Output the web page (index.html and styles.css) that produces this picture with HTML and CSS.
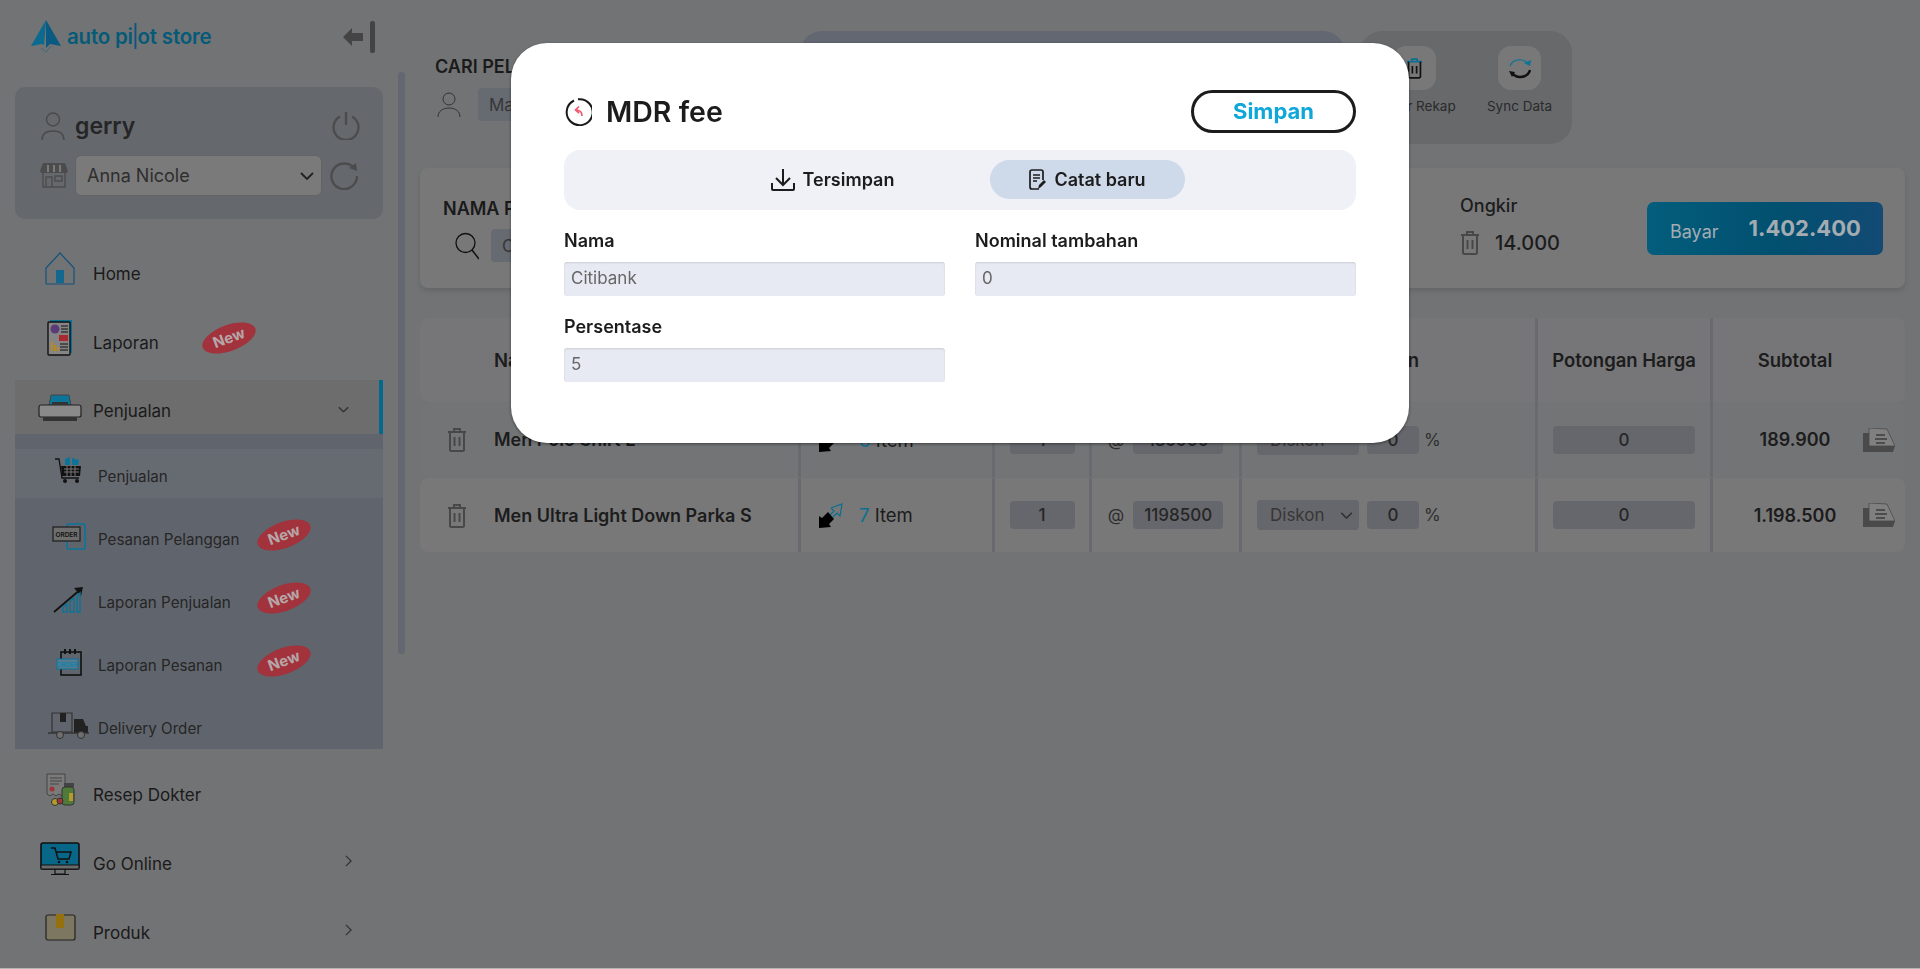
FILE: index.html
```html
<!DOCTYPE html>
<html lang="en">
<head>
    <meta charset="UTF-8">
    <title>Auto Pilot Store - Penjualan</title>
    <link rel="stylesheet" href="styles.css">
</head>
<body>
    <svg class="defs" width="0" height="0">
        <defs>
            <symbol id="trash" viewBox="0 0 20 25">
                <path d="M1 5h18M7 5V2h6v3M3 5v17.500q0 1.500 1.500 1.500h11q1.500 0 1.500-1.500V5M7.500 10v9M12.500 10v9" fill="none" stroke="currentColor" stroke-width="2"/>
            </symbol>
            <symbol id="share" viewBox="0 0 25 25">
                <path d="M13 5L24 1 22 13 19 10 15 14M13 5l3 3-4 4" fill="none" stroke="#0a6f90" stroke-width="1.200"/>
                <path d="M1 25V13l3 2 6-6 6 7-5 5 2 3z" fill="#000"/>
            </symbol>
            <symbol id="note" viewBox="0 0 32 24">
                <path d="M0 5h6v13h26l-2 6H0z" fill="#4a4a4a"/>
                <path d="M6 0l18 1 8 17H6z" fill="#808080" stroke="#4a4a4a" stroke-width=".8"/>
                <path d="M13 7h9M12 11h12M13 15h9" stroke="#3c3c3c" stroke-width="1.500"/>
            </symbol>
            <symbol id="chev-right" viewBox="0 0 8 14">
                <path d="M1 1l6 6-6 6" fill="none" stroke="#333" stroke-width="1.500"/>
            </symbol>
            <symbol id="chev-down" viewBox="0 0 14 8">
                <path d="M1 1l6 6 6-6" fill="none" stroke="currentColor" stroke-width="1.800"/>
            </symbol>
        </defs>
    </svg>

    <div class="app">
        <aside class="sidebar">
            <div class="scroll-thumb"></div>
            <div class="brand">
                <svg class="brand-mark" viewBox="0 0 32 34">
                    <path d="M16 1L1 27l11-2 2 1z" fill="#0a6a90"/>
                    <path d="M16 1l15 26-11-2-4 4z" fill="#0a5a82"/>
                    <path d="M11 29l5 4 5-6" fill="none" stroke="#3d6a7c" stroke-width="1"/>
                </svg>
                <span class="brand-name">auto pi<span class="brand-l">l</span>ot store</span>
                <svg class="collapse" viewBox="0 0 32 32">
                    <path d="M0 16L9 7v5h11v8H9v5z" fill="#444"/>
                    <rect x="27" y="0" width="5" height="32" rx="2" fill="#444"/>
                </svg>
            </div>

            <div class="user-card">
                <div class="user-row">
                    <svg class="u-icon" viewBox="0 0 24 28"><circle cx="12" cy="7.500" r="6.500" fill="none" stroke="#4a4a4a" stroke-width="1.400"/><path d="M1 28c0-7 5-9 11-9s11 2 11 9" fill="none" stroke="#4a4a4a" stroke-width="1.400"/></svg>
                    <span class="user-name">gerry</span>
                    <svg class="round-icon" viewBox="0 0 28 28"><path d="M8 4.500A12.500 12.500 0 1 0 20 4.500M14 0v13" fill="none" stroke="#4c4c4c" stroke-width="2.400"/></svg>
                </div>
                <div class="user-row">
                    <svg class="u-icon store" viewBox="0 0 28 25"><path d="M3 10v14h22V10M6 24V14h6v10M15 13h7v5h-7z" fill="none" stroke="#4c4c4c" stroke-width="1.400"/><path d="M3 0h22l3 8q-1 3-3 2H3q-2 1-3-2z" fill="#4c4c4c"/><path d="M8 2v7M14 2v7M20 2v7" stroke="#7a7b7c" stroke-width="2"/></svg>
                    <div class="store-select">
                        <span>Anna Nicole</span>
                        <svg class="select-chev" viewBox="0 0 14 8"><use href="#chev-down"/></svg>
                    </div>
                    <svg class="round-icon" viewBox="0 0 28 28"><path d="M24 6A12.800 12.800 0 1 0 27 14" fill="none" stroke="#4c4c4c" stroke-width="2.400"/><path d="M19 6l7-5 1 8z" fill="#4c4c4c"/></svg>
                </div>
            </div>

            <nav class="nav">
                <a class="nav-item">
                    <span class="nav-icon"><svg width="30" height="33" viewBox="0 0 30 33"><path d="M15 1L1 16v15q0 1 1 1h26q1 0 1-1V16z" fill="none" stroke="#14527c" stroke-width="1.200"/><rect x="11" y="18" width="8" height="13" fill="#14688f"/></svg></span>
                    <span>Home</span>
                </a>
                <a class="nav-item">
                    <span class="nav-icon"><svg width="26" height="36" viewBox="0 0 26 36"><rect x="3" y="0" width="22" height="33" fill="#0c6f90"/><rect x="1" y="2" width="22" height="33" rx="1" fill="#858585" stroke="#111" stroke-width="1.400"/><circle cx="8" cy="9" r="4.500" fill="#5b3a78"/><path d="M14 6h7M14 9h7M14 12h7M13 24h8M13 27h8M13 30h8" stroke="#111"/><rect x="12" y="15" width="9" height="6" fill="#a82a30"/><path d="M4 22h2v9H4zM7 25h2v6H7zM10 27h2v4h-2z" fill="#b58a20"/></svg></span>
                    <span>Laporan</span>
                    <span class="badge badge-main">New</span>
                </a>
                <a class="nav-item active">
                    <span class="nav-icon"><svg width="44" height="28" viewBox="0 0 44 28"><path d="M11 12l2-10h18l2 10z" fill="#0a7499" stroke="#444"/><rect x="1" y="12" width="42" height="12" rx="2" fill="#8a8a8a" stroke="#222" stroke-width="1.200"/><rect x="5" y="24" width="34" height="4" fill="#333"/><rect x="14" y="9" width="16" height="3" fill="#333"/></svg></span>
                    <span class="active-label">Penjualan</span>
                    <svg class="chev-d" viewBox="0 0 14 8"><use href="#chev-down"/></svg>
                </a>
                <div class="sub-nav">
                    <a class="sub-item current">
                        <span class="sub-icon"><svg width="27" height="26" viewBox="0 0 27 26"><path d="M0 2h4l3 19h17" fill="none" stroke="#111" stroke-width="1.300"/><path d="M6 9h20l-1 10H7z" fill="#111"/><path d="M9 12h15M9 15h15M12 9v10M16 9v10M20 9v10" stroke="#777"/><path d="M10 2l5-2v8h-5zM17 1l7 2-1 5h-6z" fill="#0a7499"/><circle cx="10" cy="24" r="2" fill="#111"/><circle cx="22" cy="24" r="2" fill="#111"/></svg></span>
                        <span>Penjualan</span>
                    </a>
                    <a class="sub-item">
                        <span class="sub-icon"><svg width="34" height="27" viewBox="0 0 34 27"><rect x="15" y="1" width="18" height="25" rx="2" fill="none" stroke="#0a7499" stroke-width="1.600"/><rect x="1" y="4" width="27" height="14" fill="#6e6e6e" stroke="#222" stroke-width="1.300"/><text x="14.500" y="14" class="ico-text">ORDER</text></svg></span>
                        <span>Pesanan Pelanggan</span>
                        <span class="badge">New</span>
                    </a>
                    <a class="sub-item">
                        <span class="sub-icon"><svg width="31" height="27" viewBox="0 0 31 27"><path d="M1 26L28 3" stroke="#111" stroke-width="1.800"/><path d="M21 2l9-1-2 9z" fill="#111"/><path d="M10 26v-5l4-3v8zM17 26V15l4-3v14zM24 26V10l3-3v19z" fill="none" stroke="#0a7499" stroke-width="1.400"/></svg></span>
                        <span>Laporan Penjualan</span>
                        <span class="badge">New</span>
                    </a>
                    <a class="sub-item">
                        <span class="sub-icon"><svg width="26" height="27" viewBox="0 0 26 27"><rect x="5" y="3" width="20" height="23" fill="none" stroke="#111" stroke-width="1.600"/><path d="M9 0v5M14 0v5M19 0v5" stroke="#111" stroke-width="2"/><rect x="1" y="10" width="21" height="10" fill="#587a90" stroke="#0a7499"/><text x="11.500" y="17.500" class="ico-text blue">ORDER</text></svg></span>
                        <span>Laporan Pesanan</span>
                        <span class="badge">New</span>
                    </a>
                    <a class="sub-item">
                        <span class="sub-icon"><svg width="42" height="27" viewBox="0 0 42 27"><path d="M4 1h20v19H4z" fill="none" stroke="#333" stroke-width="1.200"/><rect x="12" y="1" width="6" height="9" fill="#222"/><path d="M26 7h9l3 7h2v7H26z" fill="#222"/><path d="M0 21h41" stroke="#333" stroke-width="1.500"/><circle cx="12" cy="23" r="3.500" fill="#6e6e6e" stroke="#333"/><circle cx="33" cy="23" r="3.500" fill="#6e6e6e" stroke="#333"/></svg></span>
                        <span>Delivery Order</span>
                    </a>
                </div>
                <a class="nav-item after-sub">
                    <span class="nav-icon"><svg width="29" height="33" viewBox="0 0 29 33"><path d="M1 1h18v20l-3 2-3-2-3 2-3-2-3 2-3-2z" fill="#7a7a7a" stroke="#444"/><path d="M4 5h12M4 8h12M4 11h9" stroke="#444"/><circle cx="6" cy="16" r="2.500" fill="#9c3438"/><rect x="18" y="10" width="10" height="4" fill="#444"/><rect x="16" y="14" width="12" height="18" rx="3" fill="#4f7a3a" stroke="#333"/><rect x="23" y="20" width="4" height="8" fill="#b59a2e"/><circle cx="9" cy="29" r="3.500" fill="#b59a2e" stroke="#333"/><circle cx="14" cy="28" r="3" fill="#9c3438" stroke="#333"/></svg></span>
                    <span>Resep Dokter</span>
                </a>
                <a class="nav-item">
                    <span class="nav-icon"><svg width="40" height="33" viewBox="0 0 40 33"><rect x="1" y="1" width="38" height="26" rx="2" fill="#086689" stroke="#111" stroke-width="1.600"/><rect x="1" y="23" width="38" height="4" fill="#6a6b6d" stroke="#111"/><path d="M11 6h4l3 11h11l2-7H16" fill="none" stroke="#111" stroke-width="1.500"/><circle cx="19" cy="20" r="1.300" fill="#111"/><circle cx="27" cy="20" r="1.300" fill="#111"/><path d="M15 27v5h10v-5M11 32.500h18" fill="none" stroke="#111" stroke-width="1.200"/></svg></span>
                    <span>Go Online</span>
                    <svg class="chev-r" viewBox="0 0 8 14"><use href="#chev-right"/></svg>
                </a>
                <a class="nav-item">
                    <span class="nav-icon"><svg width="31" height="27" viewBox="0 0 31 27"><rect x="1" y="1" width="29" height="25" rx="2" fill="#7d7660" stroke="#222" stroke-width="1.200"/><rect x="11" y="0" width="8" height="14" fill="#94700f"/></svg></span>
                    <span>Produk</span>
                    <svg class="chev-r" viewBox="0 0 8 14"><use href="#chev-right"/></svg>
                </a>
            </nav>
        </aside>

        <main class="main">
            <div class="top-bar">
                <div class="search-customer">
                    <div class="block-title">CARI PELANGGAN</div>
                    <div class="field-row">
                        <svg class="person" viewBox="0 0 24 25"><circle cx="12" cy="7" r="6" fill="none" stroke="#333" stroke-width="1"/><path d="M1 25c0-6 5-9 11-9s11 3 11 9" fill="none" stroke="#333" stroke-width="1"/></svg>
                        <input class="dim-input" value="Masukkan nama">
                    </div>
                </div>
                <div class="mid-pill"></div>
                <div class="tools">
                    <div class="tool">
                        <div class="tool-btn"><svg width="17" height="22" viewBox="0 0 20 25"><path d="M1 5h18M7 5V2h6v3" fill="none" stroke="#0a6f90" stroke-width="2"/><path d="M3 5v17.500q0 1.500 1.500 1.500h11q1.500 0 1.500-1.500V5M7.500 10v9M12.500 10v9" fill="none" stroke="#111" stroke-width="2"/></svg></div>
                        <span>Daftar Rekap</span>
                    </div>
                    <div class="tool">
                        <div class="tool-btn"><svg width="22" height="22" viewBox="0 0 22 22"><path d="M1 9a10 9 0 0 1 18-2" fill="none" stroke="#0a7499" stroke-width="1.200"/><path d="M15 6l6 3 1-6z" fill="#0a7499"/><path d="M21 13a10 9 0 0 1-18 3" fill="none" stroke="#111" stroke-width="2.500"/><path d="M0 14l6 1-3 5z" fill="#111"/></svg></div>
                        <span>Sync Data</span>
                    </div>
                </div>
            </div>

            <section class="checkout">
                <div class="buyer">
                    <div class="block-title">NAMA PELANGGAN</div>
                    <div class="field-row">
                        <svg class="lens" viewBox="0 0 24 28"><circle cx="10.500" cy="11" r="9.500" fill="none" stroke="#111" stroke-width="1.300"/><path d="M17 18l7 9" stroke="#111" stroke-width="1.500"/></svg>
                        <input class="dim-input" value="Cari">
                    </div>
                </div>
                <div class="ongkir">
                    <div class="ongkir-title">Ongkir</div>
                    <div class="ongkir-row">
                        <svg class="trash" viewBox="0 0 20 25"><use href="#trash"/></svg>
                        <span>14.000</span>
                    </div>
                </div>
                <button class="pay"><span class="pay-label">Bayar</span><span class="pay-total">1.402.400</span></button>
            </section>

            <section class="cart">
                <div class="cart-row cart-head">
                    <div class="cell name-cell">Nama Barang</div>
                    <div class="cell center">Item</div>
                    <div class="cell center">Qty</div>
                    <div class="cell center">Harga</div>
                    <div class="cell center">Diskon</div>
                    <div class="cell center">Potongan Harga</div>
                    <div class="cell subtotal-head">Subtotal</div>
                </div>
                <div class="cart-row row-odd">
                    <div class="cell name-cell"><svg class="trash row-trash" viewBox="0 0 20 25"><use href="#trash"/></svg><b>Men Polo Shirt L</b></div>
                    <div class="cell item-cell"><svg class="share" viewBox="0 0 25 25"><use href="#share"/></svg><span><em>6</em> Item</span></div>
                    <div class="cell center"><input class="cell-input qty" value="1"></div>
                    <div class="cell center"><span class="at">@</span><input class="cell-input price" value="189900"></div>
                    <div class="cell disc-cell">
                        <div class="disc-select"><span>Diskon</span><svg viewBox="0 0 14 8"><use href="#chev-down"/></svg></div>
                        <input class="cell-input pct" value="0"><span class="pct-sign">%</span>
                    </div>
                    <div class="cell center"><input class="cell-input cut" value="0"></div>
                    <div class="cell total-cell"><b>189.900</b><svg class="note" viewBox="0 0 32 24"><use href="#note"/></svg></div>
                </div>
                <div class="cart-row row-even">
                    <div class="cell name-cell"><svg class="trash row-trash" viewBox="0 0 20 25"><use href="#trash"/></svg><b>Men Ultra Light Down Parka S</b></div>
                    <div class="cell item-cell"><svg class="share" viewBox="0 0 25 25"><use href="#share"/></svg><span><em>7</em> Item</span></div>
                    <div class="cell center"><input class="cell-input qty" value="1"></div>
                    <div class="cell center"><span class="at">@</span><input class="cell-input price" value="1198500"></div>
                    <div class="cell disc-cell">
                        <div class="disc-select"><span>Diskon</span><svg viewBox="0 0 14 8"><use href="#chev-down"/></svg></div>
                        <input class="cell-input pct" value="0"><span class="pct-sign">%</span>
                    </div>
                    <div class="cell center"><input class="cell-input cut" value="0"></div>
                    <div class="cell total-cell"><b>1.198.500</b><svg class="note" viewBox="0 0 32 24"><use href="#note"/></svg></div>
                </div>
            </section>
        </main>
    </div>

    <div class="overlay">
        <div class="modal">
            <div class="modal-head">
                <svg class="back" viewBox="0 0 28 28"><path d="M10 2.500a13 13 0 1 0 4-1.200" fill="none" stroke="#1a1a1a" stroke-width="2"/><path d="M18 18c0-4-2-6-6-6M15 8.500L11.500 12l3.500 3" fill="none" stroke="#ef5a6f" stroke-width="1.700"/></svg>
                <h2>MDR fee</h2>
                <button class="save">Simpan</button>
            </div>
            <div class="tabs">
                <div class="tab">
                    <svg class="tab-down" viewBox="0 0 24 22"><path d="M12 0v15M5 9l7 7 7-7M1 14v6q0 1 1 1h20q1 0 1-1v-6" fill="none" stroke="#1c1c1c" stroke-width="2"/></svg>
                    <span>Tersimpan</span>
                </div>
                <div class="tab on">
                    <svg class="tab-note" viewBox="0 0 17 21"><path d="M10 20H3q-2 0-2-2V3q0-2 2-2h9q2 0 2 2v8" fill="none" stroke="#1c1c1c" stroke-width="1.700"/><path d="M4 6h7M4 9h7M4 12h4" stroke="#1c1c1c" stroke-width="1.500"/><path d="M9 20l1-4 5-5 2 2-5 5z" fill="#1c1c1c"/></svg>
                    <span>Catat baru</span>
                </div>
            </div>
            <div class="form-grid">
                <label class="field">Nama<input value="Citibank"></label>
                <label class="field">Nominal tambahan<input value="0"></label>
                <label class="field">Persentase<input value="5"></label>
            </div>
        </div>
    </div>
</body>
</html>
```

FILE: styles.css
```css
* {
    box-sizing: border-box;
}
html {
    height: 100%;
    overflow: hidden;
    background: #b4b4b4;
}
body {
    margin: 0;
    height: 968px;
    overflow: hidden;
    font-family: Inter, "Open Sans", sans-serif;
    background: #727375;
    color: #1c1c1c;
}
input, button {
    font-family: inherit;
}
.defs {
    position: absolute;
}
.app {
    display: flex;
    height: 968px;
}

/* sidebar */
.sidebar {
    position: relative;
    width: 420px;
    flex: none;
    height: 968px;
    overflow: hidden;
}
.scroll-thumb {
    position: absolute;
    left: 398px;
    top: 72px;
    width: 7px;
    height: 582px;
    border-radius: 4px;
    background: #636870;
}
.brand {
    display: flex;
    align-items: center;
    height: 72px;
    padding-left: 30px;
    width: 383px;
    position: relative;
}
.brand-mark {
    width: 32px;
    height: 34px;
    margin-top: -1px;
}
.brand-name {
    margin-left: 5px;
    font-size: 20.500px;
    font-weight: 600;
    color: #055a78;
    letter-spacing: -0.2px;
}
.brand-l {
    display: inline-block;
    color: #0c5480;
    transform: scaleY(1.700);
    font-weight: 400;
}
.collapse {
    position: absolute;
    left: 343px;
    top: 21px;
    width: 32px;
    height: 32px;
}
.user-card {
    margin: 15px 0 0 15px;
    width: 368px;
    height: 132px;
    padding: 18px 23px 18px 25px;
    background: #65696e;
    border-radius: 10px;
}
.user-row {
    display: flex;
    align-items: center;
    height: 41px;
    margin-bottom: 9px;
}
.u-icon {
    width: 24px;
    height: 28px;
    margin-left: 1px;
}
.u-icon.store {
    width: 28px;
    height: 25px;
    margin-left: 0;
}
.user-name {
    margin-left: 10px;
    font-size: 23px;
    font-weight: 600;
    color: #262626;
    flex: 1;
}
.round-icon {
    width: 28px;
    height: 28px;
    margin-left: 8px;
    flex: none;
}
.store-select {
    display: flex;
    align-items: center;
    justify-content: space-between;
    margin-left: 7px;
    width: 247px;
    height: 41px;
    padding: 0 7px 0 11px;
    background: #7a7a7a;
    border: 1px solid #636363;
    border-radius: 6px;
    font-size: 18px;
    color: #2e2e2e;
}
.select-chev {
    width: 14px;
    height: 8px;
    color: #222;
}
.nav {
    margin-top: 20px;
    width: 368px;
    margin-left: 15px;
}
.nav a {
    color: #1a1a1a;
    display: flex;
    align-items: center;
    position: relative;
}
.nav-item {
    height: 69px;
    padding-left: 15px;
    font-size: 17px;
}
.nav-icon {
    width: 60px;
    margin-right: 3px;
    margin-bottom: 10px;
    display: flex;
    justify-content: center;
}
.nav a.active {
    height: 54px;
    margin-top: 3px;
    background: #6d6d6d;
    border-right: 4px solid #046a8c;
}
.active .nav-icon {
    margin-bottom: 0;
}
.active-label {
    margin-top: 8px;
}
.chev-d {
    position: absolute;
    left: 323px;
    top: 26px;
    width: 11px;
    height: 7px;
    color: #333;
}
.chev-r {
    position: absolute;
    left: 330px;
    top: 26px;
    width: 7px;
    height: 12px;
}
.sub-nav {
    height: 315px;
    overflow: hidden;
    padding-top: 15px;
    background: #60656d;
    font-size: 15.200px;
}
.nav a.sub-item {
    height: 63px;
    padding-left: 24px;
    color: #262626;
}
.nav a.sub-item.current {
    height: 49px;
    margin-bottom: 10px;
    background: #666b72;
    padding-top: 6px;
}
.sub-icon {
    width: 59px;
    margin-bottom: 7px;
    display: flex;
    justify-content: center;
}
.current .sub-icon {
    margin-bottom: 14px;
}
.nav a.after-sub {
    margin-top: 11px;
}
.ico-text {
    font-size: 6.500px;
    font-weight: 600;
    text-anchor: middle;
    fill: #111;
}
.ico-text.blue {
    fill: #0a84a8;
}
.badge {
    position: absolute;
    left: 241px;
    top: 14px;
    width: 56px;
    height: 26px;
    border-radius: 50%;
    background: #a2323b;
    color: #b5a7a9;
    font-size: 15px;
    font-weight: 700;
    line-height: 26px;
    text-align: center;
    transform: rotate(-20deg);
}
.badge-main {
    left: 186px;
    top: 17px;
}

/* main */
.main {
    flex: 1;
    min-width: 0;
    padding-right: 15px;
}
.top-bar {
    display: flex;
    height: 168px;
    padding: 31px 0 0 15px;
}
.search-customer {
    width: 365px;
    padding-top: 25px;
}
.block-title {
    font-size: 18px;
    font-weight: 600;
    color: #1a1a1a;
    white-space: nowrap;
}
.field-row {
    display: flex;
    align-items: center;
    margin-top: 11px;
}
.person {
    width: 24px;
    height: 25px;
    margin: 0 17px 0 2px;
}
.dim-input {
    width: 280px;
    height: 33px;
    padding: 0 11px;
    border: 0;
    border-radius: 4px;
    background: #666a71;
    color: #363636;
    font-size: 17px;
}
.mid-pill {
    width: 545px;
    height: 113px;
    border-radius: 22px;
    background: #636772;
}
.tools {
    display: flex;
    width: 212px;
    height: 113px;
    margin-left: 15px;
    padding: 15px 0 0 2px;
    border-radius: 22px;
    background: #68696b;
}
.tool {
    width: 105px;
    display: flex;
    flex-direction: column;
    align-items: center;
    font-size: 13.500px;
    color: #2a2a2a;
    white-space: nowrap;
}
.tool-btn {
    display: flex;
    align-items: center;
    justify-content: center;
    width: 43px;
    height: 44px;
    margin-bottom: 8px;
    border-radius: 13px;
    background: #787879;
}
.checkout {
    display: flex;
    align-items: stretch;
    height: 120px;
    padding-right: 22px;
    border-radius: 8px;
    background: #787879;
    box-shadow: 0 3px 5px rgba(0, 0, 0, .12);
}
.buyer {
    flex: 1;
    padding: 30px 0 0 23px;
}
.buyer .field-row {
    margin-top: 10px;
}
.lens {
    width: 24px;
    height: 28px;
    margin: 0 12px 0 12px;
}
.ongkir {
    width: 187px;
    padding-top: 27px;
}
.ongkir-title {
    font-size: 18px;
    font-weight: 500;
}
.ongkir-row {
    display: flex;
    align-items: center;
    margin-top: 14px;
    font-size: 20px;
    font-weight: 500;
}
.trash {
    width: 20px;
    height: 25px;
    color: #484848;
    margin-right: 15px;
}
.pay {
    align-self: center;
    display: flex;
    align-items: center;
    width: 236px;
    height: 53px;
    padding: 0 0 0 23px;
    border: 0;
    border-radius: 7px;
    background: linear-gradient(90deg, #035d7c 0%, #025070 55%, #124a74 100%);
    color: #a4acb2;
}
.pay-label {
    font-size: 18px;
    margin-top: 6px;
}
.pay-total {
    margin-left: 30px;
    font-size: 22px;
    font-weight: 700;
}
.cart {
    margin-top: 30px;
}
.cart-row {
    display: grid;
    grid-template-columns: 381px 194px 97px 150px 296px 175px 192px;
    border-radius: 8px;
}
.cart-head {
    height: 84px;
    background: #767678;
}
.row-odd {
    height: 75px;
    margin-bottom: 1px;
    background: #737476;
}
.row-even {
    height: 74px;
    background: #787879;
}
.cell {
    display: flex;
    align-items: center;
    border-right: 3px solid #686a70;
    font-size: 17px;
}
.cart-head .cell {
    font-size: 18.500px;
    font-weight: 600;
}
.cell:last-child {
    border-right: 0;
}
.center {
    justify-content: center;
}
.name-cell {
    padding-left: 74px;
}
.row-odd .name-cell,
.row-even .name-cell {
    padding-left: 27px;
}
.row-trash {
    flex: none;
    margin-right: 27px;
}
.cell b {
    font-weight: 600;
    font-size: 18px;
    white-space: nowrap;
}
.item-cell {
    padding-left: 17px;
    font-size: 18.500px;
}
.share {
    width: 25px;
    height: 25px;
    margin-right: 16px;
}
.item-cell em {
    font-style: normal;
    color: #0a6f90;
}
.cell-input {
    height: 28px;
    border: 0;
    border-radius: 4px;
    background: #66676c;
    color: #262626;
    font-size: 17px;
    font-weight: 500;
    text-align: center;
}
.qty {
    width: 65px;
}
.price {
    width: 90px;
}
.at {
    margin-right: 9px;
    color: #2e2e2e;
}
.disc-cell {
    padding-left: 15px;
}
.disc-select {
    display: flex;
    align-items: center;
    justify-content: space-between;
    width: 102px;
    height: 30px;
    padding: 0 6px 0 13px;
    border-radius: 4px;
    background: #66676c;
    color: #363636;
    font-size: 17px;
}
.disc-select svg {
    width: 13px;
    height: 7px;
    color: #333;
}
.pct {
    width: 52px;
    margin-left: 8px;
}
.pct-sign {
    margin-left: 5px;
    color: #2e2e2e;
}
.cut {
    width: 142px;
}
.subtotal-head {
    justify-content: center;
    padding-right: 28px;
}
.total-cell {
    position: relative;
    justify-content: center;
    padding-right: 28px;
}
.note {
    position: absolute;
    right: 10px;
    top: 50%;
    margin-top: -12px;
    width: 32px;
    height: 24px;
}

/* modal */
.overlay {
    position: fixed;
    inset: 0;
    display: flex;
    justify-content: center;
    align-items: flex-start;
    padding-top: 43px;
}
.modal {
    width: 898px;
    height: 400px;
    padding: 47px 53px 0;
    background: #fff;
    border-radius: 36px;
    box-shadow: 0 1px 3px rgba(0, 0, 0, .45);
}
.modal-head {
    display: flex;
    align-items: center;
    height: 43px;
}
.back {
    width: 28px;
    height: 28px;
    margin-right: 14px;
}
.modal-head h2 {
    margin: 0;
    flex: 1;
    font-size: 28.500px;
    font-weight: 600;
    color: #1c1c1c;
}
.save {
    width: 165px;
    height: 43px;
    padding: 0 0 2px;
    border: 3px solid #1c1c1c;
    border-radius: 22px;
    background: #fff;
    color: #0ea7d9;
    font-size: 22px;
    font-weight: 700;
}
.tabs {
    display: flex;
    justify-content: center;
    gap: 60px;
    height: 60px;
    margin-top: 17px;
    padding-top: 10px;
    border-radius: 16px;
    background: #f0f1f6;
}
.tab {
    display: flex;
    align-items: center;
    justify-content: center;
    gap: 8px;
    width: 195px;
    height: 39px;
    border-radius: 20px;
    font-size: 18px;
    font-weight: 600;
    color: #1c1c1c;
}
.tab.on {
    background: #ced9ea;
}
.tab-down {
    width: 24px;
    height: 22px;
}
.tab-note {
    width: 17px;
    height: 21px;
}
.form-grid {
    display: grid;
    grid-template-columns: 1fr 1fr;
    column-gap: 30px;
    row-gap: 19px;
    margin-top: 19px;
}
.field {
    display: block;
    font-size: 18px;
    font-weight: 600;
    line-height: 24px;
    color: #1c1c1c;
}
.field input {
    display: block;
    width: 100%;
    height: 34px;
    margin-top: 9px;
    padding: 0 7px 2px;
    border: 0;
    border-radius: 3px;
    background: #e7eaf3;
    box-shadow: inset 0 1px 2px rgba(0, 0, 0, .12);
    color: #666;
    font-size: 17px;
}
```
